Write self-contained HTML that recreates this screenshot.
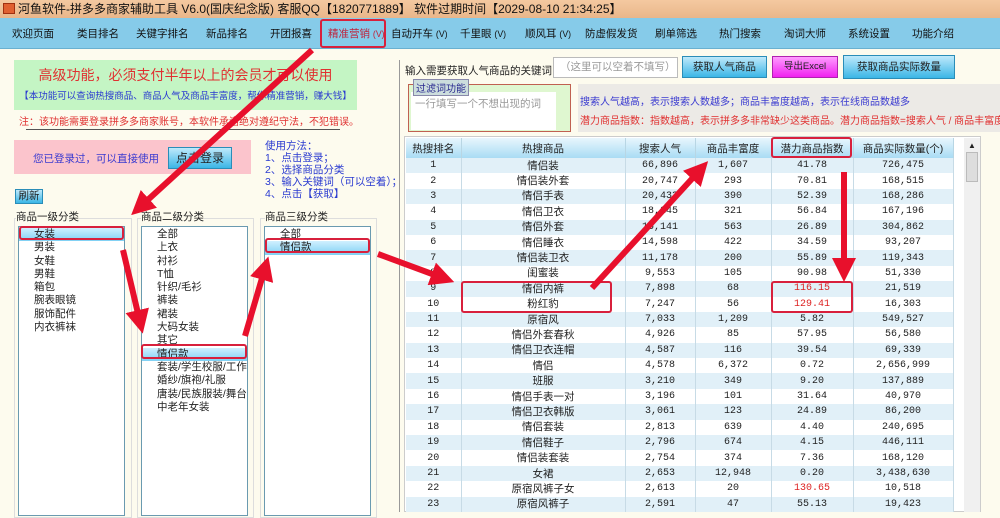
<!DOCTYPE html><html><head><meta charset="utf-8"><style>
*{margin:0;padding:0;box-sizing:border-box}
body{width:1000px;height:512px;overflow:hidden;background:#fdfbee;font-family:"Liberation Sans","Noto Sans CJK SC",sans-serif;font-size:11px;color:#222;position:relative}
.a{position:absolute;white-space:nowrap}
.title{left:0;top:0;width:1000px;height:18px;background:linear-gradient(#f4c9a0,#e9b68a);font-size:12px;line-height:18px;padding-left:18px;color:#111}
.menu{left:0;top:18px;width:1000px;height:31px;background:#86cbe9;border-bottom:1px solid #6ab0d0}
.menu span{position:absolute;top:8px;font-size:10.5px;color:#111}
.btn{background:linear-gradient(#bfe9fb,#3bb6e6);border:1px solid #2a8db8;text-align:center;font-size:10.5px}
.lst{background:#fff;border:1px solid #6a9ab0}
.lst div{height:13.3px;line-height:13px;padding-left:15px;font-size:10.5px}
.grp{border:1px solid #ddd}
table{border-collapse:collapse;font-size:10px;font-family:"Liberation Mono","Noto Sans CJK SC",monospace}
td{height:15.4px;text-align:center;vertical-align:middle;border-right:1px solid #c7dbe6;padding:0;line-height:15px;overflow:hidden;white-space:nowrap}
td:nth-child(2){font-family:"Liberation Sans","Noto Sans CJK SC",sans-serif;font-size:10.5px;line-height:14px}
tr:nth-child(even) td{background:#e1f0f8}
th{height:20px;background:linear-gradient(#e8f6fd,#a9dcf4);font-weight:normal;border-right:1px solid #b8d6e4;font-family:"Liberation Sans","Noto Sans CJK SC",sans-serif;font-size:10.5px}
.r{color:#d22}
.box{border:2px solid #d8203c;border-radius:3px}
</style></head><body>
<div class="a title">河鱼软件-拼多多商家辅助工具 V6.0(国庆纪念版) 客服QQ【1820771889】 软件过期时间【2029-08-10 21:34:25】</div>
<div class="a" style="left:3px;top:3px;width:12px;height:11px;background:#e06030;border:1px solid #a03010"></div>
<div class="a menu">
<span style="left:12px">欢迎页面</span><span style="left:77px">类目排名</span><span style="left:136px">关键字排名</span><span style="left:206px">新品排名</span><span style="left:270px">开团报喜</span><span style="left:328px;color:#c0203a">精准营销 <small>(V)</small></span><span style="left:391px">自动开车 <small>(V)</small></span><span style="left:460px">千里眼 <small>(V)</small></span><span style="left:525px">顺风耳 <small>(V)</small></span><span style="left:585px">防虚假发货</span><span style="left:655px">刷单筛选</span><span style="left:719px">热门搜索</span><span style="left:784px">淘词大师</span><span style="left:848px">系统设置</span><span style="left:912px">功能介绍</span>
</div>
<div class="a box" style="left:320px;top:19px;width:66px;height:29px"></div>
<div class="a" style="left:14px;top:60px;width:343px;height:50px;background:#c4f5c4"></div>
<div class="a" style="left:14px;top:65px;width:343px;text-align:center;color:#e03030;font-size:14px">高级功能，必须支付半年以上的会员才可以使用</div>
<div class="a" style="left:14px;top:88px;width:343px;text-align:center;color:#2a3ad0;font-size:9.5px">【本功能可以查询热搜商品、商品人气及商品丰富度，帮你精准营销，赚大钱】</div>
<div class="a" style="left:19px;top:113px;color:#e03030;font-size:10px">注：该功能需要登录拼多多商家账号，本软件承诺绝对遵纪守法，不犯错误。</div>
<div class="a" style="left:26px;top:129px;width:314px;border-top:1px solid #555"></div>
<div class="a" style="left:14px;top:140px;width:237px;height:34px;background:#fbc4cc"></div>
<div class="a" style="left:33px;top:151px;color:#3a3ad0;font-size:10.5px">您已登录过，可以直接使用</div>
<div class="a btn" style="left:168px;top:147px;width:64px;height:22px;line-height:20px;font-size:12px">点击登录</div>
<div class="a" style="left:265px;top:140px;color:#2a3ad0;line-height:12px;font-size:10.5px">使用方法：<br>1、点击登录；<br>2、选择商品分类<br>3、输入关键词（可以空着）；<br>4、点击【获取】</div>
<div class="a btn" style="left:15px;top:189px;width:28px;height:15px;line-height:13px">刷新</div>
<div class="a grp" style="left:14px;top:218px;width:118px;height:300px"></div>
<div class="a grp" style="left:137px;top:218px;width:117px;height:300px"></div>
<div class="a grp" style="left:260px;top:218px;width:117px;height:300px"></div>
<div class="a" style="left:16px;top:209px;background:#fdfbee;font-size:10.5px">商品一级分类</div>
<div class="a" style="left:141px;top:209px;background:#fdfbee;font-size:10.5px">商品二级分类</div>
<div class="a" style="left:265px;top:209px;background:#fdfbee;font-size:10.5px">商品三级分类</div>
<div class="a lst" style="left:18px;top:226px;width:107px;height:290px;padding-top:1px"><div style="background:linear-gradient(#d0f0ff,#7fd0f4)">女装</div><div>男装</div><div>女鞋</div><div>男鞋</div><div>箱包</div><div>腕表眼镜</div><div>服饰配件</div><div>内衣裤袜</div></div>
<div class="a lst" style="left:141px;top:226px;width:107px;height:290px;padding-top:1px;overflow:hidden"><div>全部</div><div>上衣</div><div>衬衫</div><div>T恤</div><div>针织/毛衫</div><div>裤装</div><div>裙装</div><div>大码女装</div><div>其它</div><div style="background:linear-gradient(#d0f0ff,#7fd0f4)">情侣款</div><div>套装/学生校服/工作制</div><div>婚纱/旗袍/礼服</div><div>唐装/民族服装/舞台服</div><div>中老年女装</div></div>
<div class="a lst" style="left:264px;top:226px;width:107px;height:290px;padding-top:1px"><div>全部</div><div style="background:linear-gradient(#d0f0ff,#7fd0f4)">情侣款</div></div>
<div class="a box" style="left:19px;top:226px;width:105px;height:14px"></div>
<div class="a box" style="left:141px;top:344px;width:106px;height:15px"></div>
<div class="a box" style="left:265px;top:238px;width:105px;height:15px"></div>
<div class="a" style="left:399px;top:60px;height:452px;border-left:1px solid #999"></div>
<div class="a" style="left:405px;top:63px;font-size:10.5px">输入需要获取人气商品的关键词：</div>
<div class="a" style="left:553px;top:57px;width:125px;height:21px;background:#fff;border:1px solid #bbb;color:#999;line-height:19px;padding-left:6px;font-size:10.5px">（这里可以空着不填写）</div>
<div class="a btn" style="left:682px;top:56px;width:85px;height:22px;line-height:20px">获取人气商品</div>
<div class="a btn" style="left:772px;top:56px;width:66px;height:22px;line-height:20px;background:linear-gradient(#ff9cff,#f020f0);border-color:#b020b0;font-size:9.5px">导出Excel</div>
<div class="a btn" style="left:843px;top:55px;width:112px;height:24px;line-height:22px">获取商品实际数量</div>
<div class="a" style="left:408px;top:84px;width:163px;height:48px;border:1px solid #c06050;background:#dff7d0"></div>
<div class="a" style="left:411px;top:92px;width:145px;height:38px;background:#fff;color:#999;padding:4px;font-size:10.5px">一行填写一个不想出现的词</div>
<div class="a" style="left:413px;top:79px;background:#cdd;color:#2a2a90;font-size:10px;border:1px solid #88a;padding:0 2px">过滤词功能</div>
<div class="a" style="left:578px;top:84px;width:422px;height:48px;background:#eceae6"></div>
<div class="a" style="left:580px;top:93px;color:#3a3ad0;font-size:10px">搜索人气越高，表示搜索人数越多；商品丰富度越高，表示在线商品数越多</div>
<div class="a" style="left:580px;top:112px;color:#e03030;font-size:10px">潜力商品指数：指数越高，表示拼多多非常缺少这类商品。潜力商品指数=搜索人气 / 商品丰富度；</div>
<div class="a" style="left:404px;top:136px;width:577px;height:376px;background:#fff;border:1px solid #ccc"></div>
<div class="a" style="left:964px;top:138px;width:16px;height:374px;background:#f0f0f0"></div>
<div class="a" style="left:966px;top:152px;width:12px;height:30px;background:#ddd;border:1px solid #bbb"></div>
<div class="a" style="left:968px;top:141px;font-size:8px">▲</div>
<table class="a" style="left:406px;top:138px;width:547px;table-layout:fixed">
<colgroup><col style="width:55px"><col style="width:164px"><col style="width:70px"><col style="width:76px"><col style="width:82px"><col style="width:100px"></colgroup>
<tr><th>热搜排名</th><th>热搜商品</th><th>搜索人气</th><th>商品丰富度</th><th>潜力商品指数</th><th>商品实际数量(个)</th></tr>
<tr><td>1</td><td>情侣装</td><td>66,896</td><td>1,607</td><td>41.78</td><td>726,475</td></tr>
<tr><td>2</td><td>情侣装外套</td><td>20,747</td><td>293</td><td>70.81</td><td>168,515</td></tr>
<tr><td>3</td><td>情侣手表</td><td>20,433</td><td>390</td><td>52.39</td><td>168,286</td></tr>
<tr><td>4</td><td>情侣卫衣</td><td>18,245</td><td>321</td><td>56.84</td><td>167,196</td></tr>
<tr><td>5</td><td>情侣外套</td><td>15,141</td><td>563</td><td>26.89</td><td>304,862</td></tr>
<tr><td>6</td><td>情侣睡衣</td><td>14,598</td><td>422</td><td>34.59</td><td>93,207</td></tr>
<tr><td>7</td><td>情侣装卫衣</td><td>11,178</td><td>200</td><td>55.89</td><td>119,343</td></tr>
<tr><td>8</td><td>闺蜜装</td><td>9,553</td><td>105</td><td>90.98</td><td>51,330</td></tr>
<tr><td>9</td><td>情侣内裤</td><td>7,898</td><td>68</td><td class="r">116.15</td><td>21,519</td></tr>
<tr><td>10</td><td>粉红豹</td><td>7,247</td><td>56</td><td class="r">129.41</td><td>16,303</td></tr>
<tr><td>11</td><td>原宿风</td><td>7,033</td><td>1,209</td><td>5.82</td><td>549,527</td></tr>
<tr><td>12</td><td>情侣外套春秋</td><td>4,926</td><td>85</td><td>57.95</td><td>56,580</td></tr>
<tr><td>13</td><td>情侣卫衣连帽</td><td>4,587</td><td>116</td><td>39.54</td><td>69,339</td></tr>
<tr><td>14</td><td>情侣</td><td>4,578</td><td>6,372</td><td>0.72</td><td>2,656,999</td></tr>
<tr><td>15</td><td>班服</td><td>3,210</td><td>349</td><td>9.20</td><td>137,889</td></tr>
<tr><td>16</td><td>情侣手表一对</td><td>3,196</td><td>101</td><td>31.64</td><td>40,970</td></tr>
<tr><td>17</td><td>情侣卫衣韩版</td><td>3,061</td><td>123</td><td>24.89</td><td>86,200</td></tr>
<tr><td>18</td><td>情侣套装</td><td>2,813</td><td>639</td><td>4.40</td><td>240,695</td></tr>
<tr><td>19</td><td>情侣鞋子</td><td>2,796</td><td>674</td><td>4.15</td><td>446,111</td></tr>
<tr><td>20</td><td>情侣装套装</td><td>2,754</td><td>374</td><td>7.36</td><td>168,120</td></tr>
<tr><td>21</td><td>女裙</td><td>2,653</td><td>12,948</td><td>0.20</td><td>3,438,630</td></tr>
<tr><td>22</td><td>原宿风裤子女</td><td>2,613</td><td>20</td><td class="r">130.65</td><td>10,518</td></tr>
<tr><td>23</td><td>原宿风裤子</td><td>2,591</td><td>47</td><td>55.13</td><td>19,423</td></tr>
</table>
<div class="a box" style="left:771px;top:137px;width:81px;height:21px"></div>
<div class="a box" style="left:461px;top:281px;width:151px;height:32px"></div>
<div class="a box" style="left:771px;top:281px;width:82px;height:32px"></div>
<svg class="a" style="left:0;top:0" width="1000" height="512">
<defs><marker id="h" markerWidth="4" markerHeight="4" refX="2" refY="2" orient="auto"><path d="M0,0L4,2L0,4z" fill="#e8102c"/></marker></defs>
<g stroke="#e8102c" stroke-width="6" fill="none" marker-end="url(#h)">
<line x1="312" y1="50" x2="140" y2="207"/>
<line x1="123" y1="250" x2="140" y2="322"/>
<line x1="245" y1="336" x2="265" y2="268"/>
<line x1="378" y1="254" x2="443" y2="278"/>
<line x1="592" y1="288" x2="700" y2="170"/>
<line x1="844" y1="172" x2="844" y2="270"/>
</g></svg>
</body></html>
